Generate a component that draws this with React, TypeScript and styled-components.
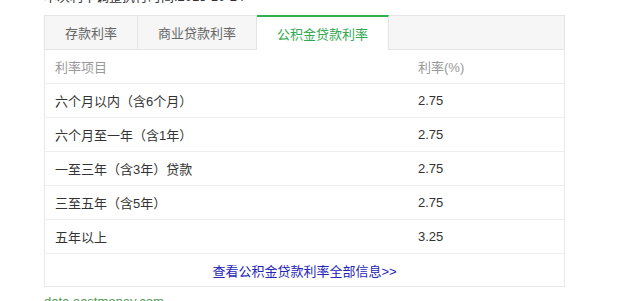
import React from "react";
import styled, { createGlobalStyle } from "styled-components";

const Global = createGlobalStyle`
  html, body { margin: 0; padding: 0; background: #fff; overflow: hidden; }
  body { font-family: "Liberation Sans", "Noto Sans CJK SC", sans-serif; font-size: 13px; color: #333; }
`;

const Page = styled.div`
  width: 521px;
  margin-left: 44px;
`;

const Intro = styled.div`
  height: 20px;
  line-height: 20px;
  margin-top: -13px;
  color: #333;
  font-size: 13px;
`;

const Tabs = styled.div`
  display: flex;
  margin-top: 8px;
  border: 1px solid #e4e4e4;
  background: #f6f6f6;
  height: 33px;
`;

const Tab = styled.div<{ $w: number; $active?: boolean }>`
  box-sizing: border-box;
  width: ${(p) => p.$w}px;
  height: ${(p) => (p.$active ? 35 : 33)}px;
  margin-top: ${(p) => (p.$active ? -1 : 0)}px;
  display: flex;
  align-items: center;
  justify-content: center;
  font-size: 13px;
  color: ${(p) => (p.$active ? "#33a852" : "#666")};
  background: ${(p) => (p.$active ? "#fff" : "transparent")};
  border-top: ${(p) => (p.$active ? "2px solid #2cb04c" : "none")};
  border-right: 1px solid #e4e4e4;
  padding-bottom: ${(p) => (p.$active ? 1 : 0)}px;
`;

const Table = styled.div`
  border: 1px solid #e8e8e8;
  border-top: none;
`;

const Row = styled.div<{ $head?: boolean }>`
  display: grid;
  grid-template-columns: 363px 1fr;
  padding-left: 10px;
  height: 33px;
  align-items: center;
  border-bottom: 1px solid #eeeeee;
  color: ${(p) => (p.$head ? "#999" : "#333")};
  font-size: 13px;
`;

const Footer = styled.div`
  height: 32px;
  display: flex;
  align-items: center;
  justify-content: center;
`;

const MoreLink = styled.a`
  color: #2424b8;
  text-decoration: none;
  font-size: 13px;
`;

const Source = styled.div`
  margin-top: 5px;
  color: #4f9a4f;
  font-size: 13px;
  line-height: 20px;
`;

const rows = [
  ["六个月以内（含6个月）", "2.75"],
  ["六个月至一年（含1年）", "2.75"],
  ["一至三年（含3年）贷款", "2.75"],
  ["三至五年（含5年）", "2.75"],
  ["五年以上", "3.25"],
];

export default function App() {
  return (
    <>
      <Global />
      <Page>
        <Intro>本次利率调整执行时间:2015-10-24</Intro>
        <Tabs>
          <Tab $w={93}>存款利率</Tab>
          <Tab $w={119}>商业贷款利率</Tab>
          <Tab $w={132} $active>公积金贷款利率</Tab>
        </Tabs>
        <Table>
          <Row $head>
            <span>利率项目</span>
            <span>利率(%)</span>
          </Row>
          {rows.map(([name, rate]) => (
            <Row key={name}>
              <span>{name}</span>
              <span>{rate}</span>
            </Row>
          ))}
          <Footer>
            <MoreLink href="#">查看公积金贷款利率全部信息&gt;&gt;</MoreLink>
          </Footer>
        </Table>
        <Source>data.eastmoney.com</Source>
      </Page>
    </>
  );
}
